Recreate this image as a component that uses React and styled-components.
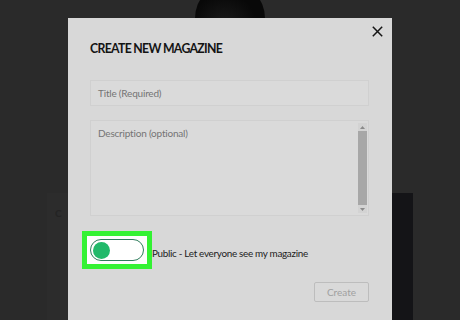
import React from "react";
import styled, { createGlobalStyle } from "styled-components";

const Global = createGlobalStyle`
  html, body { margin: 0; padding: 0; }
  body { width: 460px; height: 320px; overflow: hidden; background: #2a2a2a; font-family: "Lato", "Open Sans", sans-serif; }
`;

const Stage = styled.div`
  position: relative;
  width: 460px;
  height: 320px;
  overflow: hidden;
  background: #2a2a2a;
`;

const Avatar = styled.div`
  position: absolute;
  left: 195px;
  top: -17px;
  width: 70px;
  height: 70px;
  border-radius: 50%;
  background: radial-gradient(circle at 42% 62%, #1c1c1c 0%, #080808 55%);
`;

const SideCard = styled.div`
  position: absolute;
  top: 193px;
  bottom: 0;
  left: ${(p) => p.$left}px;
  width: ${(p) => p.$width}px;
  background: ${(p) => p.$bg};
`;

const CardLetter = styled.span`
  position: absolute;
  left: 8px;
  top: 14px;
  font: 700 10px "Lato", sans-serif;
  color: #1e1e1e;
  opacity: 0.6;
`;

const Modal = styled.div`
  position: absolute;
  left: 68px;
  top: 18px;
  width: 324px;
  bottom: 0;
  background: #d8d8d8;
  box-sizing: border-box;
  padding: 22px 23px 0 22px;
  display: flex;
  flex-direction: column;
`;

const Close = styled.button`
  position: absolute;
  right: 8px;
  top: 6px;
  width: 14px;
  height: 14px;
  padding: 0;
  border: none;
  background: none;
  display: flex;
  align-items: center;
  justify-content: center;
`;

const Title = styled.h1`
  margin: 0;
  font-family: "Lato", "Noto Sans", sans-serif;
  font-weight: 700;
  font-size: 12.3px;
  line-height: 17px;
  letter-spacing: -0.7px;
  color: #141414;
`;

const Field = styled.div`
  box-sizing: border-box;
  height: ${(p) => p.$h}px;
  margin-top: ${(p) => p.$mt}px;
  background: #dadada;
  border: 1px solid #d0d0d0;
  position: relative;
  display: flex;
`;

const Placeholder = styled.span`
  font-family: "Lato", sans-serif;
  font-size: 10px;
  letter-spacing: -0.2px;
  color: #747474;
  padding: ${(p) => p.$pad};
  line-height: 13px;
  flex: 1;
`;

const Scroll = styled.div`
  width: 9px;
  margin: 2px 1px 2px 0;
  display: flex;
  flex-direction: column;
  align-items: stretch;
  background: #d3d3d3;
`;

const Arrow = styled.div`
  height: 8px;
  display: flex;
  align-items: center;
  justify-content: center;
`;

const Thumb = styled.div`
  flex: 1;
  background: #a7a7a7;
`;

const ToggleRow = styled.div`
  display: flex;
  align-items: center;
  margin-top: 15px;
  margin-left: -8px;
`;

const Highlight = styled.div`
  box-sizing: border-box;
  width: 70px;
  height: 38px;
  border: 5px solid #33f233;
  background: #fdfdfd;
  display: flex;
  align-items: center;
  padding-left: 3px;
`;

const Pill = styled.div`
  box-sizing: border-box;
  width: 54px;
  height: 22px;
  border-radius: 11px;
  border: 1.5px solid #2f7d5c;
  background: #fff;
  display: flex;
  align-items: center;
  padding-left: 1.5px;
`;

const Knob = styled.div`
  width: 17px;
  height: 17px;
  border-radius: 50%;
  background: #22b96a;
`;

const Label = styled.span`
  font-family: "Lato", sans-serif;
  font-size: 9.9px;
  letter-spacing: -0.3px;
  color: #1c1c1c;
  margin-top: 5px;
`;

const Footer = styled.div`
  display: flex;
  justify-content: flex-end;
  margin-top: 13px;
`;

const CreateBtn = styled.button`
  box-sizing: border-box;
  width: 55px;
  height: 20px;
  border: 1px solid #bdbdbd;
  border-radius: 2px;
  background: #d9d9d9;
  color: #a0a0a0;
  font-family: "Lato", sans-serif;
  font-size: 10px;
  padding: 0;
`;

export default function App() {
  return (
    <>
      <Global />
      <Stage>
        <Avatar />
        <SideCard $left={47} $width={21} $bg="#2c2c2c">
          <CardLetter>C</CardLetter>
        </SideCard>
        <SideCard $left={392} $width={21} $bg="#141417" />
        <Modal>
          <Close aria-label="Close">
            <svg width="11" height="11" viewBox="0 0 11 11">
              <path d="M0.8 0.8 L10.2 10.2 M10.2 0.8 L0.8 10.2" stroke="#151515" strokeWidth="1.5" fill="none" />
            </svg>
          </Close>
          <Title>CREATE NEW MAGAZINE</Title>
          <Field $h={26} $mt={23}>
            <Placeholder $pad="6px 7px">Title (Required)</Placeholder>
          </Field>
          <Field $h={96} $mt={14}>
            <Placeholder $pad="6px 7px">Description (optional)</Placeholder>
            <Scroll>
              <Arrow>
                <svg width="5" height="3" viewBox="0 0 5 3"><path d="M0 3 L2.5 0 L5 3Z" fill="#8a8a8a" /></svg>
              </Arrow>
              <Thumb />
              <Arrow>
                <svg width="5" height="3" viewBox="0 0 5 3"><path d="M0 0 L2.5 3 L5 0Z" fill="#8a8a8a" /></svg>
              </Arrow>
            </Scroll>
          </Field>
          <ToggleRow>
            <Highlight>
              <Pill>
                <Knob />
              </Pill>
            </Highlight>
            <Label>Public - Let everyone see my magazine</Label>
          </ToggleRow>
          <Footer>
            <CreateBtn>Create</CreateBtn>
          </Footer>
        </Modal>
      </Stage>
    </>
  );
}
